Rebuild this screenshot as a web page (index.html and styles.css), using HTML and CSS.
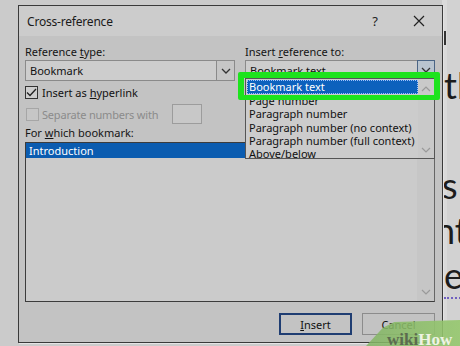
FILE: index.html
```html
<!DOCTYPE html>
<html>
<head>
<meta charset="utf-8">
<link rel="stylesheet" href="styles.css">
</head>
<body>
<div class="page">
  <div class="doc">
    <div class="doc-line l1">tl</div>
    <div class="doc-line l2">&nbsp;</div>
    <div class="doc-line l3">s</div>
    <div class="doc-line l4">nt</div>
    <div class="doc-line"><span class="dotted">e&nbsp;&nbsp;</span></div>
  </div>
  <div class="cursor-mark"></div>

  <div class="dialog">
    <div class="titlebar">
      <span class="title">Cross-reference</span>
      <span class="tb-help">?</span>
      <svg class="tb-close" width="12" height="12" viewBox="0 0 12 12"><path d="M1 1L11 11M11 1L1 11" stroke="#222" stroke-width="1.2" fill="none"/></svg>
    </div>
    <div class="body">
      <div class="top-grid">
        <div class="field">
          <div class="label">Reference <u>t</u>ype:</div>
          <div class="combo">
            <span class="combo-text">Bookmark</span>
            <span class="combo-btn"><svg width="10" height="6" viewBox="0 0 10 6"><path d="M1 1L5 5L9 1" stroke="#333" stroke-width="1.3" fill="none"/></svg></span>
          </div>
          <div class="check-row">
            <span class="checkbox"><svg width="11" height="9" viewBox="0 0 11 9"><path d="M1 4.5L4 7.5L10 1" stroke="#222" stroke-width="1.3" fill="none"/></svg></span>
            <span class="check-label">Insert as <u>h</u>yperlink</span>
          </div>
          <div class="check-row check-row2">
            <span class="checkbox disabled"></span>
            <span class="check-label disabled-text">Separate numbers with</span>
            <span class="sep-box"></span>
          </div>
        </div>
        <div class="field right-field">
          <div class="label">Insert <u>r</u>eference to:</div>
          <div class="combo">
            <span class="combo-text">Bookmark text</span>
            <span class="combo-btn active"><svg width="10" height="6" viewBox="0 0 10 6"><path d="M1 1L5 5L9 1" stroke="#333" stroke-width="1.3" fill="none"/></svg></span>
          </div>
          <div class="dropdown">
            <div class="dd-items">
              <div class="dd-item selected">Bookmark text</div>
              <div class="dd-item">Page number</div>
              <div class="dd-item">Paragraph number</div>
              <div class="dd-item">Paragraph number (no context)</div>
              <div class="dd-item">Paragraph number (full context)</div>
              <div class="dd-item">Above/below</div>
            </div>
            <div class="dd-scroll">
              <svg width="10" height="6" viewBox="0 0 10 6"><path d="M1 5L5 1L9 5" stroke="#9a9a9a" stroke-width="1.2" fill="none"/></svg>
              <svg width="10" height="6" viewBox="0 0 10 6"><path d="M1 1L5 5L9 1" stroke="#9a9a9a" stroke-width="1.2" fill="none"/></svg>
            </div>
            <div class="highlight"></div>
          </div>
        </div>
      </div>
      <div class="label list-label">For <u>w</u>hich bookmark:</div>
      <div class="listbox">
        <div class="list-items">
          <div class="list-item selected">Introduction</div>
        </div>
        <div class="list-scroll">
          <svg width="10" height="6" viewBox="0 0 10 6"><path d="M1 1L5 5L9 1" stroke="#9a9a9a" stroke-width="1.2" fill="none"/></svg>
        </div>
      </div>
      <div class="buttons">
        <button class="btn default"><u>I</u>nsert</button>
        <button class="btn">Cancel</button>
      </div>
    </div>
  </div>

  <div class="watermark">
    <span class="wm-wiki">wiki</span><span class="wm-how">How</span>
  </div>
</div>
</body>
</html>
```
FILE: styles.css
```css
* { box-sizing: border-box; }
html, body {
  margin: 0;
  padding: 0;
  width: 460px;
  height: 346px;
  overflow: hidden;
  background: #cbcbcb;
}
.page {
  position: relative;
  width: 460px;
  height: 346px;
  font-family: "Noto Sans", "Open Sans", sans-serif;
  color: #111;
}
.doc {
  padding-left: 444px;
  padding-top: 63px;
  font-family: Lato, "Noto Sans", sans-serif;
  font-size: 36px;
  line-height: 45px;
  color: #1c1c1c;
  background: linear-gradient(to right, #cbcbcb 0 442px, #dadada 442px 447px, #d2d2d2 447px);
  height: 346px;
}
.doc-line { white-space: nowrap; height: 45px; }
.doc-line.l1 { height: 46px; }
.doc-line.l2 { height: 54px; }
.doc-line.l3 { margin-left: -2px; }
.doc-line.l4 { margin-left: -9px; }
.dotted {
  border-bottom: 2px dotted #7060c0;
}
.cursor-mark {
  position: absolute;
  left: 443px;
  top: 31px;
  width: 3px;
  height: 14px;
  background: #333;
}

.dialog {
  position: absolute;
  left: 18px;
  top: 5px;
  width: 425px;
  height: 338px;
  border: 1px solid #3a3a3a;
  background: #c3c3c3;
  box-shadow: 1px 1px 0 #e4e4e4;
}
.titlebar {
  height: 30px;
  background: #cccccc;
  display: flex;
  align-items: center;
  padding-left: 8px;
  padding-right: 17px;
}
.title {
  font-size: 12px;
  letter-spacing: -0.2px;
  color: #1a1a1a;
  flex: 1;
}
.tb-help {
  font-size: 13px;
  margin-right: 35px;
  color: #222;
}
.body {
  padding: 8px 7px 0 6px;
  font-size: 11px;
}
.label {
  height: 15px;
  line-height: 15px;
  color: #141414;
  white-space: nowrap;
}
.top-grid {
  display: grid;
  grid-template-columns: 210px 190px;
  column-gap: 10px;
}
.field { position: relative; }
.combo {
  margin-top: 1px;
  height: 21px;
  border: 1px solid #8a8a8a;
  background: #cdcdcd;
  display: flex;
  align-items: center;
}
.combo-text {
  flex: 1;
  padding-left: 4px;
  color: #111;
}
.combo-btn {
  width: 18px;
  height: 100%;
  display: flex;
  align-items: center;
  justify-content: center;
  border-left: 1px solid #8a8a8a;
  background: #c6c6c6;
}
.combo-btn.active {
  background: #b9c4cf;
  border: 1px solid #4b6585;
  margin-right: -1px;
  height: calc(100% + 1px);
  margin-top: -1px;
}
.check-row {
  display: flex;
  align-items: center;
  margin-top: 4px;
  height: 14px;
}
.check-row2 {
  margin-top: 5px;
  height: 20px;
}
.checkbox {
  flex-shrink: 0;
  width: 13px;
  height: 13px;
  border: 1px solid #333;
  background: #cecece;
  display: flex;
  align-items: center;
  justify-content: center;
  margin-right: 4px;
}
.checkbox.disabled {
  border-color: #a6a6a6;
  background: #c6c6c6;
  margin-left: 1px;
  margin-right: 3px;
}
.disabled-text {
  color: #8b8b8b;
  width: 118px;
  flex-shrink: 0;
  white-space: nowrap;
  letter-spacing: -0.2px;
}
.sep-box {
  flex-shrink: 0;
  margin-left: 12px;
  width: 30px;
  height: 20px;
  border: 1px solid #9c9c9c;
  background: #c8c8c8;
}
.dropdown {
  position: absolute;
  left: 0;
  top: 34px;
  width: 190px;
  height: 81px;
  border: 1px solid #555;
  background: #cccccc;
  display: flex;
}
.dd-items {
  flex: 1;
  padding-top: 1px;
  padding-left: 1px;
}
.dd-item {
  height: 13.3px;
  line-height: 13.3px;
  padding-left: 2px;
  white-space: nowrap;
  color: #111;
}
.dd-item.selected {
  height: 14px;
  background: #0c61bd;
  color: #fff;
  outline: 1px dotted #9cc0ff;
  outline-offset: -1px;
}
.dd-scroll {
  width: 16px;
  background: #c9c9c9;
  display: flex;
  flex-direction: column;
  align-items: center;
  justify-content: space-between;
  padding: 7px 0 5px;
}
.highlight {
  position: absolute;
  left: -8px;
  top: -7px;
  width: 202px;
  height: 28px;
  border: 6px solid #1de31d;
  border-bottom-width: 5px;
  border-radius: 2px;
}
.list-label { margin-top: 1px; }
.listbox {
  margin-top: 2px;
  height: 160px;
  border: 1px solid #3c3c3c;
  border-right-color: #666;
  background: #cbcbcb;
  display: flex;
}
.list-items { flex: 1; }
.list-item {
  height: 15px;
  line-height: 15px;
  padding-left: 3px;
}
.list-item.selected {
  background: #0b5cb0;
  color: #fff;
}
.list-scroll {
  width: 17px;
  background: #c6c6c6;
  display: flex;
  flex-direction: column;
  justify-content: flex-end;
  align-items: center;
  padding-bottom: 6px;
}
.buttons {
  display: flex;
  justify-content: flex-end;
  gap: 10px;
  margin-top: 11px;
}
.btn {
  font-family: "Noto Sans", "Open Sans", sans-serif;
  font-size: 11px;
  height: 22px;
  width: 73px;
  border: 1px solid #8c8c8c;
  background: #c3c3c3;
  color: #111;
  padding: 0;
}
.btn.default {
  border: 2px solid #1f3d72;
}
.watermark {
  position: absolute;
  right: 0;
  bottom: 0;
  width: 94px;
  height: 26px;
  background: linear-gradient(to right, rgba(130,180,100,0.85), rgba(150,200,110,0.9));
  clip-path: polygon(0 100%, 18% 30%, 30% 8%, 100% 0, 100% 100%);
  font-family: "Liberation Serif", serif;
  font-weight: bold;
  font-size: 17px;
  line-height: 17px;
  padding-left: 21px;
  padding-top: 11px;
  white-space: nowrap;
}
.wm-wiki { color: #5b6b4f; }
.wm-how { color: #eef3e4; }
```
